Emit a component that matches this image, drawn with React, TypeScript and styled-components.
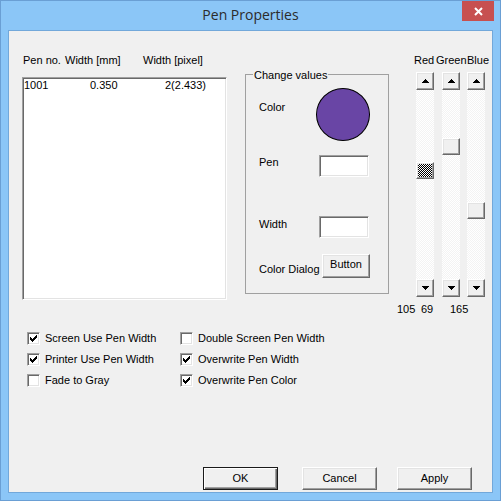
import React from "react";
import styled, { createGlobalStyle, css } from "styled-components";

const Global = createGlobalStyle`
  html, body { margin: 0; padding: 0; }
  body {
    width: 501px; height: 501px; overflow: hidden;
    font-family: "Liberation Sans", Arial, sans-serif;
    font-size: 11px; color: #000;
  }
  * { box-sizing: border-box; }
`;

const raised = css`
  border: 1px solid;
  border-color: #ffffff #696969 #696969 #ffffff;
  box-shadow: inset -1px -1px 0 #a0a0a0, inset 1px 1px 0 #e3e3e3;
`;

const sunken = css`
  border: 1px solid;
  border-color: #a0a0a0 #ffffff #ffffff #a0a0a0;
  box-shadow: inset 1px 1px 0 #696969, inset -1px -1px 0 #e3e3e3;
`;

const Window = styled.div`
  width: 501px;
  height: 501px;
  border: 1px solid #6a9fd4;
  background: #8bc6f7;
  display: flex;
  flex-direction: column;
`;

const TitleBar = styled.div`
  height: 29px;
  flex: none;
  display: grid;
  grid-template-columns: 1fr auto 1fr;
  align-items: start;
`;

const Title = styled.div`
  grid-column: 2;
  font-family: "Open Sans", "Noto Sans", sans-serif;
  font-size: 14px;
  line-height: 19px;
  padding-top: 4px;
  color: #2b2b2b;
`;

const CloseButton = styled.div`
  grid-column: 3;
  justify-self: end;
  width: 32px;
  height: 20px;
  margin-right: 6px;
  background: #c75050;
  display: flex;
  align-items: center;
  justify-content: center;
`;

const Client = styled.div`
  height: 463px;
  margin: 0 7px;
  border: 1px solid #72a8da;
  background: #f0f0f0;
  display: flex;
  flex-direction: column;
`;

const TopRow = styled.div`
  display: flex;
  align-items: flex-start;
  height: 286px;
  padding: 23px 0 0 13px;
`;

const LeftCol = styled.div`
  width: 205px;
  display: flex;
  flex-direction: column;
`;

const Cols = styled.div<{ $cols: string; $pad: number }>`
  display: grid;
  grid-template-columns: ${(p) => p.$cols};
  padding-left: ${(p) => p.$pad}px;
  line-height: 13px;
  white-space: nowrap;
`;

const ListBox = styled.div`
  margin-top: 10px;
  height: 223px;
  background: #fff;
  ${sunken};
  padding-top: 1px;
`;

const GroupBox = styled.div`
  position: relative;
  margin: 20px 0 0 18px;
  width: 144px;
  height: 220px;
  border: 1px solid #a0a0a0;
  padding: 13px 0 0 13px;
`;

const Legend = styled.span`
  position: absolute;
  top: -6px;
  left: 7px;
  padding: 0 1px;
  background: #f0f0f0;
  line-height: 13px;
  white-space: nowrap;
`;

const FieldRow = styled.div<{ $mt: number }>`
  display: flex;
  align-items: flex-start;
  margin-top: ${(p) => p.$mt}px;
`;

const FieldLabel = styled.div<{ $mt: number }>`
  width: 57px;
  flex: none;
  margin-top: ${(p) => p.$mt}px;
  line-height: 13px;
  white-space: nowrap;
`;

const Swatch = styled.div<{ $color: string }>`
  width: 54px;
  height: 53px;
  border-radius: 50%;
  border: 1px solid #000;
  background: ${(p) => p.$color};
`;

const EditBox = styled.div`
  width: 50px;
  height: 22px;
  margin-left: 3px;
  background: #fff;
  ${sunken};
`;

const SmallButton = styled.div`
  width: 48px;
  height: 24px;
  margin-left: 6px;
  background: #f0f0f0;
  ${raised};
  display: flex;
  align-items: center;
  justify-content: center;
  line-height: 13px;
  padding-bottom: 3px;
`;

const RightCol = styled.div`
  margin-left: 8px;
  display: flex;
  flex-direction: column;
`;

const LabelRow = styled.div<{ $pad: number }>`
  display: flex;
  padding-left: ${(p) => p.$pad}px;
  line-height: 13px;
  white-space: nowrap;
`;

const Cell = styled.span<{ $w: number }>`
  width: ${(p) => p.$w}px;
  flex: none;
`;

const ScrollRow = styled.div`
  display: flex;
  margin: 5px 0 6px;
  padding-left: 19px;
`;

const ScrollBar = styled.div<{ $ml: number }>`
  width: 18px;
  height: 225px;
  margin-left: ${(p) => p.$ml}px;
  display: flex;
  flex-direction: column;
`;

const ArrowButton = styled.div`
  width: 18px;
  height: 18px;
  flex: none;
  background: #f0f0f0;
  ${raised};
  display: flex;
  align-items: center;
  justify-content: center;
`;

const Track = styled.div`
  flex: 1;
  position: relative;
  background: repeating-conic-gradient(#f3f3f3 0 25%, #ffffff 0 50%) 0 0 / 2px 2px;
`;

const Thumb = styled.div<{ $focus: boolean }>`
  position: absolute;
  left: 0;
  width: 18px;
  height: 17px;
  ${raised};
  background: ${(p) =>
    p.$focus
      ? "repeating-conic-gradient(#000 0 25%, #fff 0 50%) 0 0 / 2px 2px"
      : "#f0f0f0"};
`;

const CheckGrid = styled.div`
  display: grid;
  grid-template-columns: 153px auto;
  grid-template-rows: repeat(3, 21px);
  grid-auto-flow: column;
  margin-top: 11px;
  padding-left: 18px;
`;

const CheckItem = styled.label`
  display: flex;
  align-items: center;
  gap: 5px;
  line-height: 13px;
  white-space: nowrap;
`;

const CheckBox = styled.span`
  width: 13px;
  height: 13px;
  flex: none;
  background: #fff;
  ${sunken};
  display: flex;
  align-items: center;
  justify-content: center;
`;

const ButtonRow = styled.div`
  margin-top: auto;
  display: flex;
  justify-content: flex-end;
  gap: 20px;
  padding: 0 20px 2px 0;
`;

const PushButton = styled.div<{ $default?: boolean }>`
  width: 75px;
  height: 23px;
  background: #f0f0f0;
  display: flex;
  align-items: center;
  justify-content: center;
  line-height: 13px;
  ${(p) =>
    p.$default
      ? css`
          margin-right: 4px;
          border: 1px solid #1a1a1a;
          box-shadow: inset 1px 1px 0 #fff, inset -1px -1px 0 #696969,
            inset -2px -2px 0 #a0a0a0;
        `
      : raised};
`;

const Arrow = ({ down }: { down?: boolean }) => (
  <svg width="7" height="4" viewBox="0 0 7 4" shapeRendering="crispEdges">
    <polygon points={down ? "0,0 7,0 3.5,4" : "3.5,0 7,4 0,4"} fill="#000" />
  </svg>
);

const Check = () => (
  <svg width="7" height="7" viewBox="0 0 7 7" shapeRendering="crispEdges">
    <polygon points="0,2 2,4 6,0 7,0 7,3 2,7 0,5" fill="#000" />
  </svg>
);

const channels = [
  { name: "Red", value: 105, ml: 0, focus: true },
  { name: "Green", value: 69, ml: 8, focus: false },
  { name: "Blue", value: 165, ml: 7, focus: false },
];

const checks = [
  { label: "Screen Use Pen Width", on: true },
  { label: "Printer Use Pen Width", on: true },
  { label: "Fade to Gray", on: false },
  { label: "Double Screen Pen Width", on: false },
  { label: "Overwrite Pen Width", on: true },
  { label: "Overwrite Pen Color", on: true },
];

export default function App() {
  const [r, g, b] = channels.map((c) => c.value);
  return (
    <>
      <Global />
      <Window>
        <TitleBar>
          <Title>Pen Properties</Title>
          <CloseButton>
            <svg width="9" height="9" viewBox="0 0 9 9">
              <path d="M1 1 L8 8 M8 1 L1 8" stroke="#fff" strokeWidth="2" />
            </svg>
          </CloseButton>
        </TitleBar>
        <Client>
          <TopRow>
            <LeftCol>
              <Cols $cols="42px 78px auto" $pad={1}>
                <span>Pen no.</span>
                <span>Width [mm]</span>
                <span>Width [pixel]</span>
              </Cols>
              <ListBox>
                <Cols $cols="66px 75px auto" $pad={1}>
                  <span>1001</span>
                  <span>0.350</span>
                  <span>2(2.433)</span>
                </Cols>
              </ListBox>
            </LeftCol>
            <GroupBox>
              <Legend>Change values</Legend>
              <FieldRow $mt={0}>
                <FieldLabel $mt={13}>Color</FieldLabel>
                <Swatch $color={`rgb(${r}, ${g}, ${b})`} />
              </FieldRow>
              <FieldRow $mt={14}>
                <FieldLabel $mt={1}>Pen</FieldLabel>
                <EditBox />
              </FieldRow>
              <FieldRow $mt={39}>
                <FieldLabel $mt={2}>Width</FieldLabel>
                <EditBox />
              </FieldRow>
              <FieldRow $mt={16}>
                <FieldLabel $mt={9}>Color Dialog</FieldLabel>
                <SmallButton>Button</SmallButton>
              </FieldRow>
            </GroupBox>
            <RightCol>
              <LabelRow $pad={17}>
                <Cell $w={22}>Red</Cell>
                <Cell $w={31}>Green</Cell>
                <Cell $w={22}>Blue</Cell>
              </LabelRow>
              <ScrollRow>
                {channels.map((c) => (
                  <ScrollBar key={c.name} $ml={c.ml}>
                    <ArrowButton>
                      <Arrow />
                    </ArrowButton>
                    <Track>
                      <Thumb
                        $focus={c.focus}
                        style={{ top: Math.round(1 + (c.value / 255) * 172) }}
                      />
                    </Track>
                    <ArrowButton>
                      <Arrow down />
                    </ArrowButton>
                  </ScrollBar>
                ))}
              </ScrollRow>
              <LabelRow $pad={0}>
                <Cell $w={24}>{r}</Cell>
                <Cell $w={29}>{g}</Cell>
                <Cell $w={24}>{b}</Cell>
              </LabelRow>
            </RightCol>
          </TopRow>
          <CheckGrid>
            {checks.map((c) => (
              <CheckItem key={c.label}>
                <CheckBox>{c.on && <Check />}</CheckBox>
                {c.label}
              </CheckItem>
            ))}
          </CheckGrid>
          <ButtonRow>
            <PushButton $default>OK</PushButton>
            <PushButton>Cancel</PushButton>
            <PushButton>Apply</PushButton>
          </ButtonRow>
        </Client>
      </Window>
    </>
  );
}
